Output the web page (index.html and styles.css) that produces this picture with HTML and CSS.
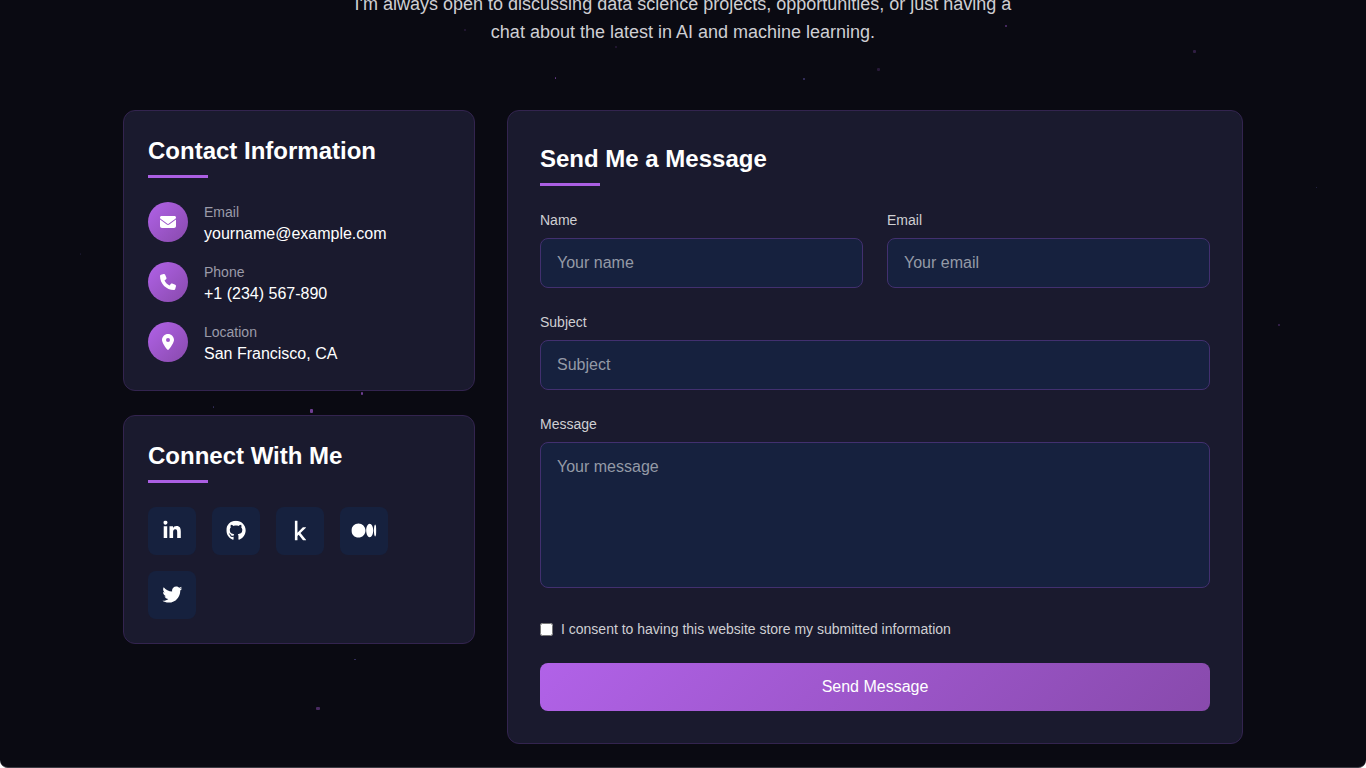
FILE: index.html
```html
<!DOCTYPE html>
<html lang="en">
<head>
<meta charset="utf-8">
<title>Contact</title>
<link rel="stylesheet" href="styles.css">
</head>
<body>
<main class="page">
  <div class="stars" aria-hidden="true">
    <i class="star" style="left:555px;top:77px;width:1px;height:2px;opacity:.6"></i>
    <i class="star" style="left:464px;top:29px;width:2px;height:2px;opacity:.2"></i>
    <i class="star" style="left:615px;top:46px;width:2px;height:2px;opacity:.2"></i>
    <i class="star" style="left:1005px;top:25px;width:2px;height:2px;opacity:.5"></i>
    <i class="star blue" style="left:803px;top:78px;width:2px;height:2px;opacity:.5"></i>
    <i class="star" style="left:877px;top:68px;width:3px;height:3px;opacity:.2"></i>
    <i class="star" style="left:1193px;top:50px;width:3px;height:3px;opacity:.25"></i>
    <i class="star blue" style="left:1316px;top:187px;width:1px;height:1px;opacity:.35"></i>
    <i class="star" style="left:1278px;top:324px;width:2px;height:2px;opacity:.35"></i>
    <i class="star" style="left:361px;top:392px;width:2px;height:3px;opacity:.65"></i>
    <i class="star" style="left:310px;top:409px;width:3px;height:4px;opacity:.65"></i>
    <i class="star blue" style="left:213px;top:406px;width:1px;height:2px;opacity:.4"></i>
    <i class="star blue" style="left:354px;top:659px;width:2px;height:1px;opacity:.45"></i>
    <i class="star" style="left:316px;top:707px;width:4px;height:3px;opacity:.4"></i>
    <i class="star blue" style="left:80px;top:253px;width:1px;height:2px;opacity:.15"></i>
  </div>

  <p class="intro">I'm always open to discussing data science projects, opportunities, or just having a chat about the latest in AI and machine learning.</p>

  <div class="columns">
    <div class="side">
      <section class="card info">
        <h2 class="title">Contact Information</h2>
        <div class="contacts">
          <div class="contact">
            <span class="badge"><svg class="glyph" viewBox="0 0 512 512"><path d="M48 64C21.5 64 0 85.5 0 112c0 15.1 7.1 29.3 19.2 38.4L236.8 313.6c11.4 8.5 27 8.5 38.4 0L492.8 150.4c12.1-9.1 19.2-23.3 19.2-38.4c0-26.5-21.5-48-48-48L48 64zM0 176L0 384c0 35.3 28.7 64 64 64l384 0c35.3 0 64-28.7 64-64l0-208L294.4 339.2c-22.8 17.1-54 17.1-76.8 0L0 176z"/></svg></span>
            <div class="lines"><div class="label">Email</div><div class="value">yourname@example.com</div></div>
          </div>
          <div class="contact">
            <span class="badge"><svg class="glyph" viewBox="0 0 512 512"><path d="M164.9 24.6c-7.7-18.6-28-28.5-47.4-23.2l-88 24C12.1 30.2 0 46 0 64C0 311.4 200.6 512 448 512c18 0 33.8-12.1 38.6-29.5l24-88c5.3-19.4-4.6-39.7-23.2-47.4l-96-40c-16.3-6.8-35.2-2.1-46.3 11.6L304.7 368C234.3 334.7 177.3 277.7 144 207.3L193.3 167c13.7-11.2 18.4-30 11.6-46.3l-40-96z"/></svg></span>
            <div class="lines"><div class="label">Phone</div><div class="value">+1 (234) 567-890</div></div>
          </div>
          <div class="contact">
            <span class="badge"><svg class="glyph" viewBox="0 0 384 512"><path d="M215.7 499.2C267 435 384 279.4 384 192C384 86 298 0 192 0S0 86 0 192c0 87.4 117 243 168.3 307.2c12.3 15.3 35.1 15.3 47.4 0zM192 128a64 64 0 1 1 0 128 64 64 0 1 1 0-128z"/></svg></span>
            <div class="lines"><div class="label">Location</div><div class="value">San Francisco, CA</div></div>
          </div>
        </div>
      </section>

      <section class="card social">
        <h2 class="title">Connect With Me</h2>
        <div class="links">
          <a class="link"><svg viewBox="0 0 448 512"><path d="M100.28 448H7.4V148.9h92.88zM53.79 108.1C24.09 108.1 0 83.5 0 53.8a53.79 53.79 0 0 1 107.58 0c0 29.7-24.1 54.3-53.79 54.3zM447.9 448h-92.68V302.4c0-34.7-.7-79.2-48.29-79.2-48.29 0-55.69 37.7-55.69 76.7V448h-92.78V148.9h89.08v40.8h1.3c12.4-23.5 42.69-48.3 87.88-48.3 94 0 111.28 61.9 111.28 142.3V448z"/></svg></a>
          <a class="link"><svg viewBox="0 0 496 512"><path d="M165.9 397.4c0 2-2.3 3.6-5.2 3.6-3.3.3-5.6-1.3-5.6-3.6 0-2 2.3-3.6 5.2-3.6 3-.3 5.6 1.3 5.6 3.6zm-31.1-4.5c-.7 2 1.3 4.3 4.3 4.9 2.6 1 5.6 0 6.2-2s-1.3-4.3-4.3-5.2c-2.6-.7-5.5.3-6.2 2.3zm44.2-1.7c-2.9.7-4.9 2.6-4.6 4.9.3 2 2.9 3.3 5.9 2.6 2.9-.7 4.9-2.6 4.6-4.6-.3-1.9-3-3.2-5.9-2.9zM244.8 8C106.1 8 0 113.3 0 252c0 110.9 69.8 205.8 169.5 239.2 12.8 2.3 17.3-5.6 17.3-12.1 0-6.2-.3-40.4-.3-61.4 0 0-70 15-84.7-29.8 0 0-11.4-29.1-27.8-36.6 0 0-22.9-15.7 1.6-15.4 0 0 24.9 2 38.6 25.8 21.9 38.6 58.6 27.5 72.9 20.9 2.3-16 8.8-27.1 16-33.7-55.9-6.2-112.3-14.3-112.3-110.5 0-27.5 7.6-41.3 23.6-58.9-2.6-6.5-11.1-33.3 2.6-67.9 20.9-6.5 69 27 69 27 20-5.6 41.5-8.5 62.8-8.5s42.8 2.9 62.8 8.5c0 0 48.1-33.6 69-27 13.7 34.7 5.2 61.4 2.6 67.9 16 17.7 25.8 31.5 25.8 58.9 0 96.5-58.9 104.2-114.8 110.5 9.2 7.9 17 22.9 17 46.4 0 33.7-.3 75.4-.3 83.6 0 6.5 4.6 14.4 17.3 12.1C428.2 457.8 496 362.9 496 252 496 113.3 383.5 8 244.8 8z"/></svg></a>
          <a class="link"><svg viewBox="0 0 320 512"><path d="M304.2 501.5L158.4 320.3 298.2 185c2.6-2.7 1.7-10.5-5.3-10.5h-69.2c-3.5 0-7 1.8-10.5 5.3L80.9 313.5V7.5q0-7.5-7.5-7.5H21.5Q14 0 14 7.5v497q0 7.5 7.5 7.5h51.9q7.5 0 7.5-7.5v-109l30.8-29.3 110.5 140.6c3 3.5 6.5 5.3 10.5 5.3h66.9q5.25 0 6-3z"/></svg></a>
          <a class="link medium"><svg viewBox="0 0 640 512"><path d="M180.5 74.262C80.813 74.262 0 155.633 0 256s80.819 181.738 180.5 181.738S361 356.373 361 256 280.191 74.262 180.5 74.262zm288.25 10.646c-49.845 0-90.245 76.619-90.245 171.095s40.406 171.1 90.251 171.1 90.251-76.619 90.251-171.1H559c0-94.503-40.4-171.095-90.248-171.095zm139.506 17.821c-17.526 0-31.735 68.628-31.735 153.274s14.2 153.274 31.735 153.274S640 340.631 640 256c0-84.649-14.215-153.271-31.742-153.271z"/></svg></a>
          <a class="link"><svg viewBox="0 0 512 512"><path d="M459.37 151.716c.325 4.548.325 9.097.325 13.645 0 138.72-105.583 298.558-298.558 298.558-59.452 0-114.68-17.219-161.137-47.106 8.447.974 16.568 1.299 25.34 1.299 49.055 0 94.213-16.568 130.274-44.832-46.132-.975-84.792-31.188-98.112-72.772 6.498.974 12.995 1.624 19.818 1.624 9.421 0 18.843-1.3 27.614-3.573-48.081-9.747-84.143-51.98-84.143-102.985v-1.299c13.969 7.797 30.214 12.67 47.431 13.319-28.264-18.843-46.781-51.005-46.781-87.391 0-19.492 5.197-37.36 14.294-52.954 51.655 63.675 129.3 105.258 216.365 109.807-1.624-7.797-2.599-15.918-2.599-24.04 0-57.828 46.782-104.934 104.934-104.934 30.213 0 57.502 12.67 76.67 33.137 23.715-4.548 46.456-13.32 66.599-25.34-7.798 24.366-24.366 44.833-46.132 57.827 21.117-2.273 41.584-8.122 60.426-16.243-14.292 20.791-32.161 39.308-52.628 54.253z"/></svg></a>
        </div>
      </section>
    </div>

    <form class="card form">
      <h2 class="title">Send Me a Message</h2>
      <div class="row">
        <label class="field">Name<input class="input" type="text" placeholder="Your name"></label>
        <label class="field">Email<input class="input" type="email" placeholder="Your email"></label>
      </div>
      <label class="field">Subject<input class="input" type="text" placeholder="Subject"></label>
      <label class="field">Message<textarea class="input area" placeholder="Your message"></textarea></label>
      <label class="consent"><input class="check" type="checkbox">I consent to having this website store my submitted information</label>
      <button class="send" type="button">Send Message</button>
    </form>
  </div>
</main>
</body>
</html>
```
FILE: styles.css
```css
* { box-sizing: border-box; }

html { background: #fff; overflow: hidden; }

body {
  margin: 0;
  height: 768px;
  overflow: hidden;
  font-family: "Liberation Sans", Arial, sans-serif;
  color: #fff;
}

.page {
  position: relative;
  height: 768px;
  overflow: hidden;
  background: #0a0a12;
  border-bottom: 1px solid #3d3d45;
  border-radius: 0 0 8px 8px;
}

.star { position: absolute; border-radius: 1px; background: #a45ad8; }
.star.blue { background: #7064c8; }

.intro {
  width: 680px;
  margin: -10px auto 0;
  font-size: 18px;
  line-height: 28px;
  text-align: center;
  color: #cfcfd3;
}

.columns {
  position: relative;
  display: grid;
  grid-template-columns: 352px 736px;
  gap: 32px;
  align-items: start;
  width: 1120px;
  margin: 64px auto 0;
}

.side { display: flex; flex-direction: column; gap: 24px; }

.card {
  padding: 24px;
  background: #1a1a2e;
  border: 1px solid #33244f;
  border-radius: 12px;
}
.info { height: 281px; }
.social { height: 229px; }

.title {
  margin: 0 0 24px;
  height: 43px;
  font-size: 24px;
  line-height: 31px;
}
.title::after {
  content: "";
  display: block;
  width: 60px;
  height: 3px;
  margin-top: 9px;
  background: #ab5fe3;
}

.contacts { display: flex; flex-direction: column; gap: 20px; }
.contact { display: flex; align-items: flex-start; gap: 16px; height: 40px; }
.badge {
  display: flex;
  align-items: center;
  justify-content: center;
  width: 40px;
  height: 40px;
  border-radius: 50%;
  background: linear-gradient(135deg, #b162e8, #884aac);
}
.glyph { height: 16px; fill: #fff; }
.label { font-size: 14px; line-height: 20px; color: #9b9ba9; }
.value { font-size: 16px; line-height: 24px; }

.links { display: flex; flex-wrap: wrap; gap: 16px; margin-top: -0.5px; }
.link {
  display: flex;
  align-items: center;
  justify-content: center;
  width: 48px;
  height: 48px;
  border-radius: 8px;
  background: #16213e;
}
.link svg { height: 20px; fill: #fff; transform: translate(0.3px, -0.5px); }
.medium svg { transform: translate(-0.6px, -0.5px); }

.form { height: 634px; padding: 32px; }
.row { display: grid; grid-template-columns: 1fr 1fr; gap: 24px; }
.field {
  display: block;
  margin-bottom: 24px;
  font-size: 14px;
  line-height: 20px;
  color: #cfcfd3;
}
.input {
  display: block;
  width: 100%;
  height: 50px;
  margin-top: 8px;
  padding: 12px 16px;
  border: 1px solid #42306f;
  border-radius: 8px;
  background: #16213e;
  color: #fff;
  font: 16px/24px "Liberation Sans", Arial, sans-serif;
}
.input::placeholder { color: #949aa6; opacity: 1; }
.area { height: 146px; resize: none; }

.consent {
  display: flex;
  align-items: center;
  gap: 8px;
  margin-top: 31px;
  height: 20px;
  font-size: 14px;
  color: #cfcfd3;
}
.check { width: 13px; height: 13px; margin: 1px 0 0; }

.send {
  display: block;
  width: 100%;
  height: 48px;
  margin-top: 24px;
  padding: 0;
  border: 0;
  border-radius: 8px;
  background: linear-gradient(135deg, #b162e8, #884aac);
  color: #fff;
  font: 16px "Liberation Sans", Arial, sans-serif;
}
```
